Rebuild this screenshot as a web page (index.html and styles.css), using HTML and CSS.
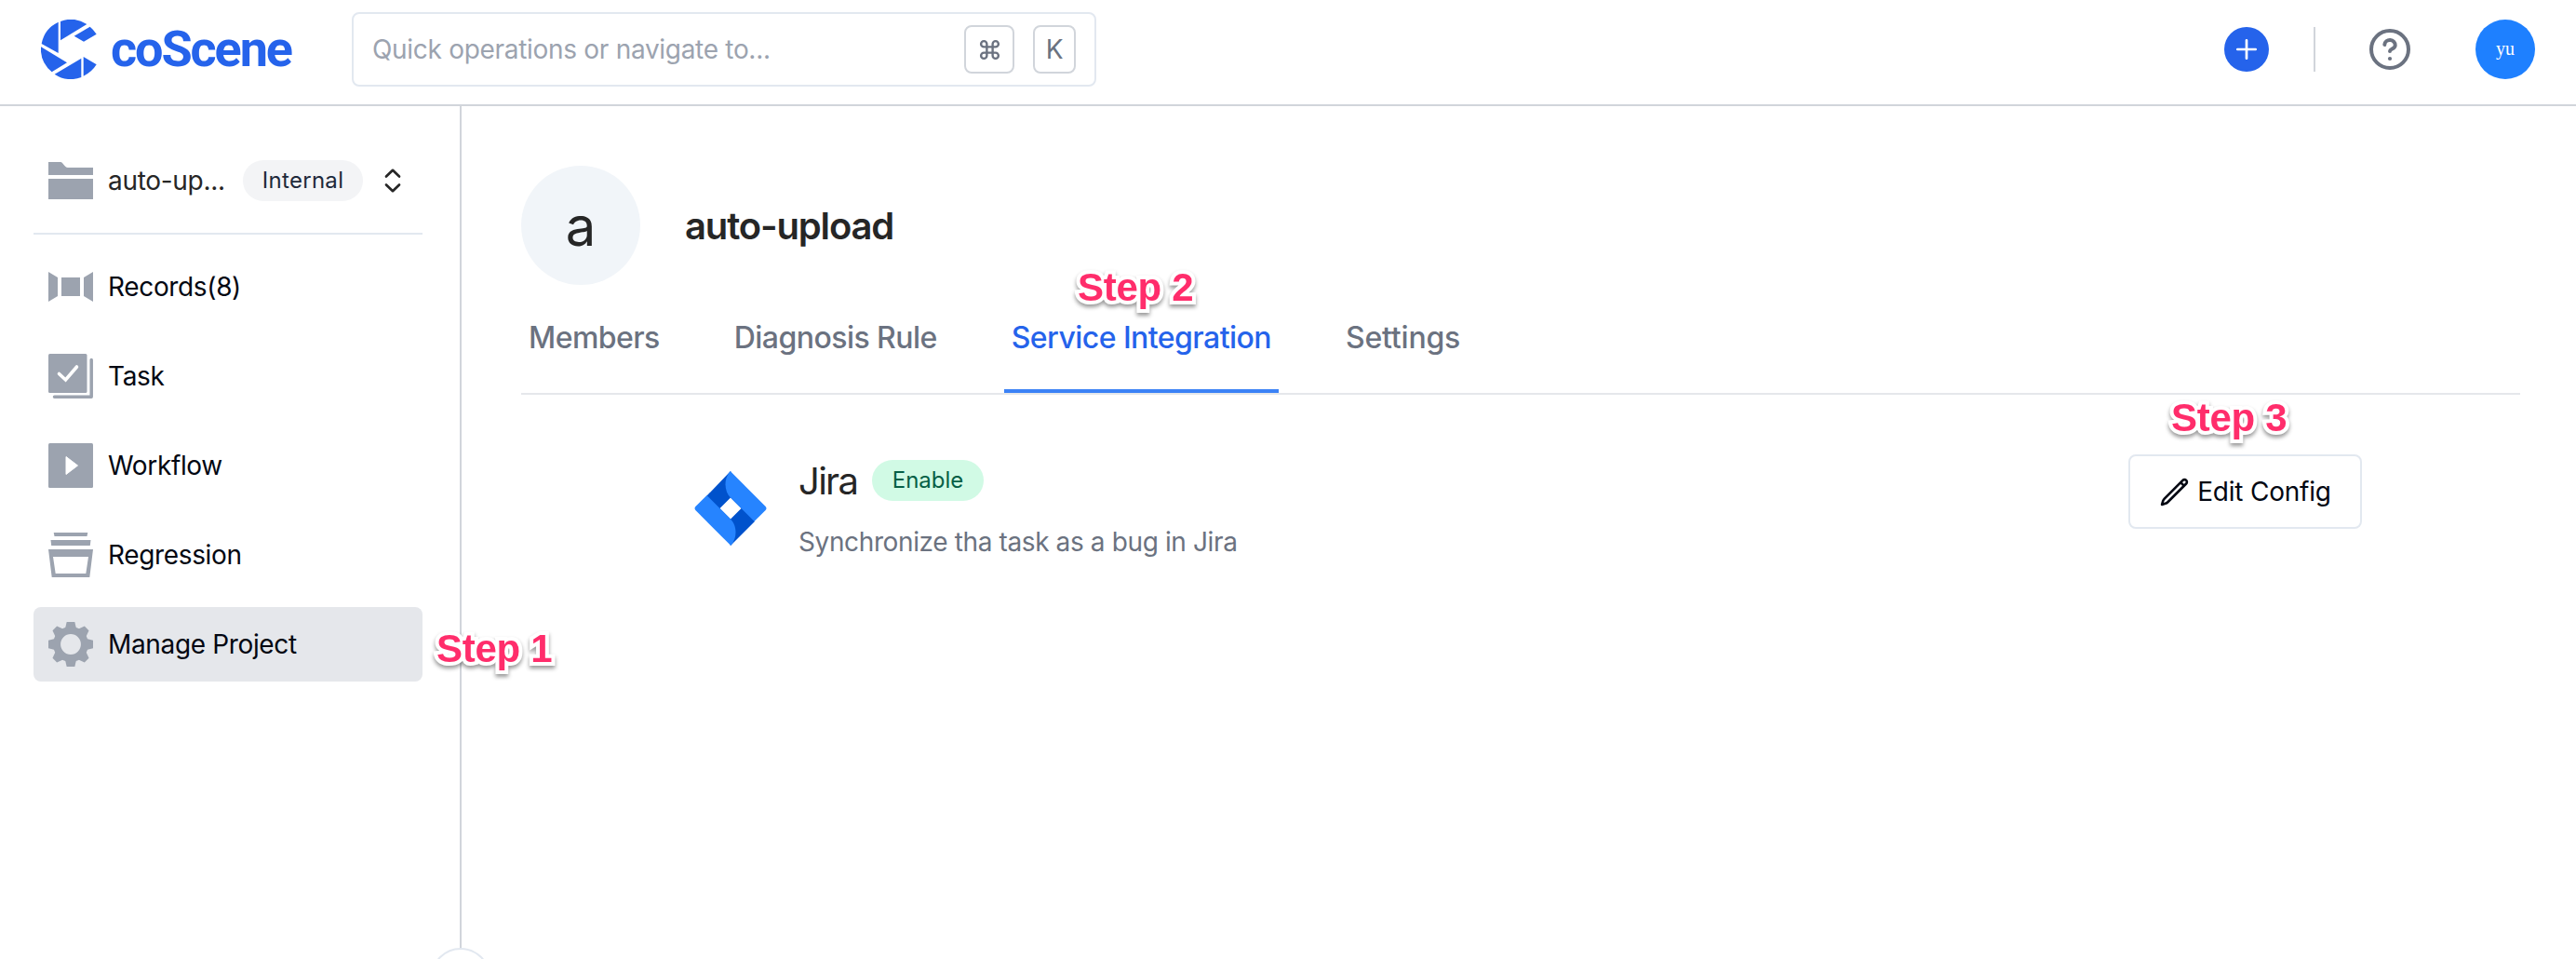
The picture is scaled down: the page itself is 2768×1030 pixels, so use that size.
FILE: index.html
```
<!DOCTYPE html>
<html lang="en">
<head>
<meta charset="utf-8">
<title>auto-upload - coScene</title>
<link rel="stylesheet" href="styles.css">
</head>
<body>
<header class="topbar">
  <a class="brand">
    <svg class="brand-mark" viewBox="132 63 192 192" fill="currentColor">
      <path d="M195 68.700A96 96 0 0 1 280 78L195 130Z"/>
      <path d="M290 86Q302 96 311 110L270 134L239 116Z"/>
      <path d="M188 71.500V171L134 141A96 96 0 0 1 188 71.500Z"/>
      <path d="M132 151L216 202L167 232A96 96 0 0 1 132 151Z"/>
      <path d="M176 239L262 188V249A96 96 0 0 1 176 239Z"/>
      <path d="M269 183L311 208A96 96 0 0 1 269 245Z"/>
    </svg>
    <span class="brand-name">coScene</span>
  </a>
  <div class="search">
    <span class="search-hint">Quick operations or navigate to...</span>
    <kbd class="key key-cmd"><svg width="25" height="25" viewBox="0 0 24 24" fill="none" stroke="currentColor" stroke-width="2.300"><path d="M15 6v12a3 3 0 1 0 3-3H6a3 3 0 1 0 3 3V6a3 3 0 1 0-3 3h12a3 3 0 1 0-3-3"/></svg></kbd>
    <kbd class="key key-k">K</kbd>
  </div>
  <div class="actions">
    <button class="add"><svg width="24" height="24" viewBox="0 0 24 24" stroke="#fff" stroke-width="2.700" stroke-linecap="round"><path d="M12 2.300V21.700M2.300 12H21.700"/></svg></button>
    <span class="split"></span>
    <svg class="help" width="44" height="44" viewBox="-22 -22 44 44" fill="none" stroke="#6b7280" stroke-width="4" stroke-linecap="round"><circle r="20"/><path d="M-5.700-5A5.700 5.300 0 0 1 5.700-4.300C5.700-.500 0-.500 0 2"/><circle cy="10" r="2.100" fill="#6b7280" stroke="none"/></svg>
    <span class="user">yu</span>
  </div>
</header>
<div class="body">
  <aside class="sidebar">
    <div class="project">
      <svg width="48" height="48" viewBox="0 0 48 48" fill="#9ca3af"><path d="M0 4H13C16 4 17 10 21 10H48V18H0Z"/><path d="M0 22H48V44H0Z"/></svg>
      <span class="project-name">auto-up...</span>
      <span class="badge badge-gray">Internal</span>
      <svg class="updown" width="20" height="28" viewBox="0 0 20 28" fill="none" stroke="#262626" stroke-width="2.700" stroke-linecap="round" stroke-linejoin="round"><path d="M3 9.500L10 2.800L17 9.500M3 18.500L10 25.200L17 18.500"/></svg>
    </div>
    <nav class="nav">
      <a class="nav-item"><svg width="48" height="48" viewBox="0 0 48 48" fill="#9ca3af"><path d="M0 8L10 14V34L0 40ZM14 14H34V34H14ZM48 8L38 14V34L48 40Z"/></svg>Records(8)</a>
      <a class="nav-item"><svg width="48" height="48" viewBox="0 0 48 48" fill="none"><rect width="41.500" height="42" rx="1.500" fill="#9ca3af"/><path d="M46.200 6.500V46.200H6.500" stroke="#9ca3af" stroke-width="3.500" stroke-linecap="round" stroke-linejoin="round"/><path d="M11.500 21.500L18.500 28L30.500 14" stroke="#fff" stroke-width="3.600" stroke-linecap="round"/></svg>Task</a>
      <a class="nav-item"><svg width="48" height="48" viewBox="0 0 48 48"><rect width="48" height="48" rx="1.500" fill="#9ca3af"/><path d="M19 14.500L31.500 24L19 33.500Z" fill="#fff" stroke="#fff" stroke-linejoin="round"/></svg>Workflow</a>
      <a class="nav-item"><svg width="48" height="48" viewBox="0 0 48 48" fill="#9ca3af"><path d="M5.700 0H42.300L41.500 4H6.500ZM2.500 8H45.500L44.800 14H3.200Z"/><path fill-rule="evenodd" d="M0 18H48L44.300 48H3.700ZM5 26L7.700 44H40.300L43 26Z"/></svg>Regression</a>
      <a class="nav-item active"><svg width="48" height="48" viewBox="-24 -24 48 48" fill="#9ca3af"><circle r="14.900" fill="none" stroke="#9ca3af" stroke-width="8"/><path d="M-6-17L-4.300-24H4.300L6-17Z"/><path d="M-6-17L-4.300-24H4.300L6-17Z" transform="rotate(90)"/><path d="M-6-17L-4.300-24H4.300L6-17Z" transform="rotate(180)"/><path d="M-6-17L-4.300-24H4.300L6-17Z" transform="rotate(270)"/><path d="M-6-17L-3.300-24.300H3.300L6-17Z" transform="rotate(45)"/><path d="M-6-17L-3.300-24.300H3.300L6-17Z" transform="rotate(135)"/><path d="M-6-17L-3.300-24.300H3.300L6-17Z" transform="rotate(225)"/><path d="M-6-17L-3.300-24.300H3.300L6-17Z" transform="rotate(315)"/></svg>Manage Project</a>
    </nav>
    <svg class="collapse" width="64" height="12" viewBox="0 0 64 12"><circle cx="32" cy="32" r="31" fill="#fff" stroke="#e2e8f0" stroke-width="2"/></svg>
  </aside>
  <main class="main">
    <div class="heading">
      <span class="avatar">a</span>
      <h1 class="title">auto-upload</h1>
    </div>
    <div class="tabs">
      <a class="tab">Members</a>
      <a class="tab">Diagnosis Rule</a>
      <a class="tab selected">Service Integration</a>
      <a class="tab last">Settings</a>
    </div>
    <section class="integration">
      <svg class="jira" width="80" height="80" viewBox="0 0 80 80">
        <path fill="#0052cc" fill-rule="evenodd" d="M40 0L66 54L40 80L14 27ZM40 28.500L28.500 40L40 51.500L51.500 40Z"/>
        <path fill="#2684ff" d="M39.700 0L77.600 38Q79.400 40 77.600 42L65.500 54L40 28.500C33.500 22 32 9 39.700 0Z"/>
        <path fill="#2684ff" d="M39.700 0L77.600 38Q79.400 40 77.600 42L65.500 54L40 28.500C33.500 22 32 9 39.700 0Z" transform="rotate(180 40 40)"/>
      </svg>
      <div class="info">
        <div class="info-head"><h2 class="name">Jira</h2><span class="badge badge-green">Enable</span></div>
        <p class="desc">Synchronize tha task as a bug in Jira</p>
      </div>
      <button class="edit"><svg width="33" height="33" viewBox="0 0 24 24" fill="none" stroke="currentColor" stroke-width="1.900" stroke-linecap="round" stroke-linejoin="round"><path d="M16.862 4.487l1.687-1.688a1.875 1.875 0 112.652 2.652L6.832 19.820a4.500 4.500 0 01-1.897 1.130l-2.685.8.8-2.685a4.500 4.500 0 011.130-1.897L16.863 4.487zm0 0L19.500 7.125"/></svg>Edit Config</button>
    </section>
  </main>
</div>
<span class="step step-1">Step 1</span>
<span class="step step-2">Step 2</span>
<span class="step step-3">Step 3</span>
</body>
</html>
```
FILE: styles.css
```
* { box-sizing: border-box; }
body {
  margin: 0;
  height: 1030px;
  position: relative;
  overflow: hidden;
  display: flex;
  flex-direction: column;
  background: #fff;
  color: #262626;
  font: 28px/40px Inter, sans-serif;
  letter-spacing: -0.3px;
  white-space: nowrap;
}
svg { display: block; flex: none; }
button { font: inherit; letter-spacing: inherit; padding: 0; background: none; border: 0; }

.topbar {
  flex: none;
  display: flex;
  align-items: center;
  height: 114px;
  padding: 0 44px 6px;
  border-bottom: 2px solid #d1d5db;
}
.brand { display: flex; align-items: center; gap: 11px; width: 334px; color: #2563eb; }
.brand-mark { width: 64px; height: 64px; }
.brand-name { font: 700 54px/64px Roboto, sans-serif; letter-spacing: -2.1px; }
.search {
  display: flex;
  align-items: center;
  width: 800px;
  height: 80px;
  padding: 0 20px;
  border: 2px solid #e2e8f0;
  border-radius: 8px;
}
.search-hint { flex: 1; color: #9ca3af; letter-spacing: -0.3px; }
.key {
  display: flex;
  align-items: center;
  justify-content: center;
  height: 52px;
  border: 2px solid #d1d5db;
  border-radius: 8px;
  color: #6b7280;
  font: 28px/40px Inter, sans-serif;
}
.key-cmd { width: 54px; margin-right: 20px; }
.key-k { width: 46px; }
.actions { display: flex; align-items: center; margin-left: auto; }
.add { display: flex; align-items: center; justify-content: center; width: 48px; height: 48px; border-radius: 50%; background: #2563eb; }
.split { width: 2px; height: 48px; margin: 0 58px 0 48px; background: #d1d5db; }
.user {
  width: 64px;
  height: 64px;
  margin-left: 70px;
  border-radius: 50%;
  background: #1e80ff;
  color: #fff;
  font: 20px/62px "Liberation Serif", serif;
  letter-spacing: 0;
  text-align: center;
}

.body { flex: 1; display: flex; min-height: 0; }
.sidebar { position: relative; flex: none; width: 496px; padding: 40px 40px 0 36px; border-right: 2px solid #d1d5db; }
.project { display: flex; align-items: center; height: 98px; padding: 0 0 16px 16px; border-bottom: 2px solid #e2e8f0; }
.project-name { width: 161px; padding-left: 16px; }
.badge {
  display: inline-block;
  height: 44px;
  border-radius: 22px;
  font-size: 24px;
  line-height: 44px;
  text-align: center;
}
.badge-gray { width: 129px; background: #f3f4f6; color: #1e293b; letter-spacing: 0.3px; }
.badge-green { width: 120px; background: #d1fae5; color: #065f46; letter-spacing: 0; }
.updown { margin-left: 22px; }
.nav { display: flex; flex-direction: column; gap: 16px; padding-top: 16px; }
.nav-item { display: flex; align-items: center; gap: 16px; height: 80px; padding-left: 16px; border-radius: 8px; color: #030712; letter-spacing: -0.35px; }
.nav-item.active { background: #e5e7eb; }
.collapse { position: absolute; right: -33px; bottom: 0; }

.main { flex: 1; padding: 64px 60px 0 64px; }
.heading { display: flex; align-items: center; gap: 48px; }
.avatar { width: 128px; height: 128px; padding-top: 1px; border-radius: 50%; background: #f1f5f9; font-size: 58px; line-height: 128px; text-align: center; }
.title { margin: 0; padding-top: 1px; font-size: 40px; font-weight: 600; letter-spacing: -1.15px; }
.tabs { display: flex; gap: 64px; height: 118px; border-bottom: 2px solid #e5e7eb; }
.tab { height: 116px; padding: 37px 8px 0; font-size: 32px; font-weight: 500; letter-spacing: -0.55px; color: #6b7280; }
.tab.last { letter-spacing: -0.2px; }
.tab.selected { color: #2563eb; border-bottom: 4px solid #3b82f6; }
.integration { display: flex; align-items: flex-start; padding: 64px 170px 0 185px; }
.jira { margin-top: 18px; }
.info { flex: 1; margin-left: 33px; }
.info-head { display: flex; align-items: center; gap: 17px; height: 44px; margin-top: 6px; }
.name { width: 62px; margin: 0; padding-top: 1px; font-size: 40px; font-weight: 400; letter-spacing: -1.7px; }
.desc { margin: 24px 0 0; color: #6b7280; letter-spacing: -0.38px; }
.edit {
  display: flex;
  align-items: center;
  justify-content: center;
  gap: 8px;
  width: 251px;
  height: 80px;
  border: 2px solid #e2e8f0;
  border-radius: 8px;
  color: #030712;
  letter-spacing: -0.2px;
}

/* Walkthrough callouts floating above the page */
.step {
  position: absolute;
  color: #ff2d6b;
  font: 700 42px/42px "Liberation Sans", Arial, sans-serif;
  -webkit-text-stroke: 8px #fff;
  paint-order: stroke fill;
  stroke-linejoin: round;
  filter: drop-shadow(0 3px 2px rgba(0, 0, 0, 0.4));
}
.step-1 { left: 469px; top: 676px; }
.step-2 { left: 1158px; top: 288px; }
.step-3 { left: 2333px; top: 428px; }
```
